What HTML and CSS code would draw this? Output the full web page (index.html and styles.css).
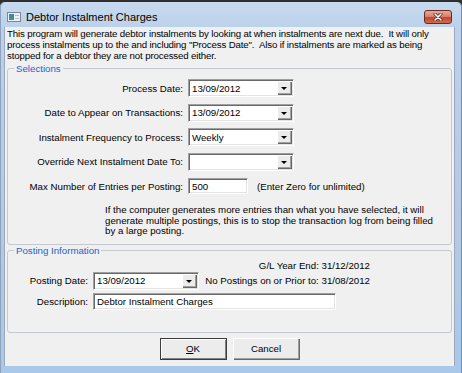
FILE: index.html
```html
<!DOCTYPE html>
<html>
<head>
<meta charset="utf-8">
<link rel="stylesheet" href="styles.css">
</head>
<body>
<div class="window">
  <div class="titlebar">
    <svg class="app-icon" width="14" height="10" viewBox="0 0 14 10">
      <defs>
        <linearGradient id="pic" x1="0" y1="0" x2="0" y2="1">
          <stop offset="0" stop-color="#3a7fd0"/>
          <stop offset="1" stop-color="#3aa05a"/>
        </linearGradient>
      </defs>
      <rect x="0.5" y="0.5" width="13" height="9" fill="#eef2f6" stroke="#7a8896"/>
      <rect x="2" y="2" width="5" height="6" fill="url(#pic)"/>
      <rect x="8" y="3" width="4" height="1" fill="#b5bcc5"/>
      <rect x="8" y="6" width="4" height="1" fill="#b5bcc5"/>
    </svg>
    <span class="title">Debtor Instalment Charges</span>
    <div class="close">
      <svg width="10" height="8" viewBox="0 0 10 8">
        <path d="M2 1 L8 7 M8 1 L2 7" stroke="#5a1f16" stroke-width="3" stroke-linecap="round"/>
        <path d="M2 1 L8 7 M8 1 L2 7" stroke="#ffffff" stroke-width="1.6" stroke-linecap="round"/>
      </svg>
    </div>
  </div>
  <div class="client">
    <p class="intro">This program will generate debtor instalments by looking at when instalments are next due.&nbsp; It will only<br>process instalments up to the and including "Process Date".&nbsp; Also if instalments are marked as being<br>stopped for a debtor they are not processed either.</p>

    <fieldset class="group selections">
      <legend>Selections</legend>
      <div class="form">
        <span class="lbl">Process Date:</span>
        <div class="combo"><span class="val">13/09/2012</span><span class="dd"></span></div>

        <span class="lbl">Date to Appear on Transactions:</span>
        <div class="combo"><span class="val">13/09/2012</span><span class="dd"></span></div>

        <span class="lbl">Instalment Frequency to Process:</span>
        <div class="combo"><span class="val">Weekly</span><span class="dd"></span></div>

        <span class="lbl">Override Next Instalment Date To:</span>
        <div class="combo"><span class="val"></span><span class="dd"></span></div>

        <span class="lbl">Max Number of Entries per Posting:</span>
        <div class="maxrow"><div class="field max">500</div><span class="hint">(Enter Zero for unlimited)</span></div>
      </div>
      <p class="note">If the computer generates more entries than what you have selected, it will<br>generate multiple postings, this is to stop the transaction log from being filled<br>by a large posting.</p>
    </fieldset>

    <fieldset class="group posting">
      <legend>Posting Information</legend>
      <div class="gl">G/L Year End: 31/12/2012</div>
      <div class="prow">
        <span class="plbl">Posting Date:</span>
        <div class="combo pcombo"><span class="val">13/09/2012</span><span class="dd"></span></div>
        <span class="prior">No Postings on or Prior to: 31/08/2012</span>
      </div>
      <div class="prow desc-row">
        <span class="plbl">Description:</span>
        <div class="field desc">Debtor Instalment Charges</div>
      </div>
    </fieldset>

    <div class="buttons">
      <button class="btn default"><u>O</u>K</button>
      <button class="btn">Cancel</button>
    </div>
  </div>
</div>
</body>
</html>
```

FILE: styles.css
```css
* { box-sizing: border-box; }

html, body {
  margin: 0;
  padding: 0;
  background: #2e2e2e;
}

body {
  font-family: "Liberation Sans", Arial, sans-serif;
  font-size: 9.7px;
  line-height: 11px;
  color: #000;
}

.window {
  margin-top: 2px;
  width: 462px;
  height: 371px;
  display: flex;
  flex-direction: column;
  background: linear-gradient(to bottom, #c7daef 0px, #bcd2eb 25px, #b4c9e4 60%, #aac8ea 100%);
  border-radius: 5px 5px 0 0;
  box-shadow: inset -1px 0 0 #6f8fb8, inset 1px 0 0 #8ea2bd;
}

.titlebar {
  height: 25px;
  flex: none;
  display: flex;
  align-items: center;
  padding: 5px 10px 0 7px;
}

.app-icon {
  flex: none;
  display: block;
  margin-top: -1px;
}

.title {
  margin-left: 5px;
  font-size: 11px;
  color: #000;
}

.close {
  margin-left: auto;
  width: 28px;
  height: 14px;
  border: 1px solid #6b2a20;
  border-radius: 3px;
  background: linear-gradient(to bottom, #e9a99a 0%, #d8826e 45%, #c4452e 55%, #d46a4d 100%);
  display: flex;
  align-items: center;
  justify-content: center;
  margin-top: -1px;
}

.close svg { display: block; }

.client {
  flex: none;
  height: 339px;
  margin: 0 7px 0 4px;
  padding: 0 2px 0 2px;
  background: #f0f0f0;
  border-left: 1px solid #9aa9bd;
  border-right: 1px solid #9aa9bd;
  display: flex;
  flex-direction: column;
}

.intro {
  margin: 1px 0 1.5px 0;
  white-space: nowrap;
  letter-spacing: -0.15px;
}

.group {
  margin: 0;
  padding: 5.5px 0 0 0;
  border: 1px solid #c4c9cf;
  border-radius: 3px;
  min-inline-size: 0;
}

.group legend {
  margin-left: 6px;
  padding: 0 2px;
  color: #1f5fd0;
  line-height: 11px;
}

.selections {
  padding-bottom: 7px;
}

.form {
  display: grid;
  grid-template-columns: 175px auto;
  column-gap: 5px;
  row-gap: 6.5px;
  grid-auto-rows: 18px;
  align-items: center;
}

.lbl {
  text-align: right;
  white-space: nowrap;
}

.combo {
  width: 106px;
  height: 18px;
  background: #fff;
  border-top: 1px solid #a0a0a0;
  border-left: 1px solid #a0a0a0;
  border-right: 1px solid #fff;
  border-bottom: 1px solid #fff;
  box-shadow: inset 1px 1px 0 #696969, inset -1px -1px 0 #e3e3e3;
  display: flex;
  align-items: center;
  padding: 1px 1px 1px 2px;
}

.combo .val {
  flex: 1;
  padding-left: 1px;
  white-space: nowrap;
}

.dd {
  flex: none;
  width: 15px;
  height: 14px;
  background: #ececec;
  box-shadow: inset 1px 1px 0 #ffffff, inset -1px -1px 0 #696969, inset -2px -2px 0 #a0a0a0;
  display: flex;
  align-items: center;
  justify-content: center;
}

.dd::after {
  content: "";
  display: block;
  width: 0;
  height: 0;
  border-left: 3px solid transparent;
  border-right: 3px solid transparent;
  border-top: 3px solid #000;
  margin-top: 1px;
  margin-right: 1px;
}

.maxrow {
  display: flex;
  align-items: center;
}

.field {
  height: 17px;
  background: #fff;
  border-top: 1px solid #a0a0a0;
  border-left: 1px solid #a0a0a0;
  border-right: 1px solid #fff;
  border-bottom: 1px solid #fff;
  box-shadow: inset 1px 1px 0 #696969, inset -1px -1px 0 #e3e3e3;
  padding: 2px 0 0 3px;
  white-space: nowrap;
}

.field.max {
  width: 60px;
  height: 16px;
}

.hint {
  margin-left: 9px;
}

.note {
  margin: 10px 0 0 97px;
  line-height: 10.5px;
  white-space: nowrap;
}

.posting {
  margin-top: 0.5px;
  padding: 4px 0 21.5px 0;
}

.gl {
  width: 362px;
  text-align: right;
  white-space: nowrap;
}

.prow {
  width: 362px;
  display: flex;
  align-items: center;
  margin-top: 0.5px;
}

.plbl {
  width: 80px;
  text-align: right;
  white-space: nowrap;
  flex: none;
}

.pcombo {
  margin-left: 5px;
  flex: none;
}

.prior {
  flex: 1;
  text-align: right;
  white-space: nowrap;
}

.desc-row {
  margin-top: 3.5px;
}

.field.desc {
  margin-left: 5px;
  width: 243px;
}

.buttons {
  margin-top: 5px;
  display: flex;
  justify-content: center;
  gap: 6px;
}

.btn {
  width: 67px;
  height: 22px;
  font-family: inherit;
  font-size: 9.7px;
  color: #000;
  background: #ececec;
  border: none;
  border-radius: 0;
  padding: 0;
  box-shadow: inset 1px 1px 0 #fff, inset -1px -1px 0 #696969, inset -2px -2px 0 #a0a0a0;
}

.btn.default {
  border: 1px solid #3c3c3c;
  box-shadow: inset 1px 1px 0 #fff, inset -1px -1px 0 #808080;
}

.btn u { text-decoration: underline; }
```
